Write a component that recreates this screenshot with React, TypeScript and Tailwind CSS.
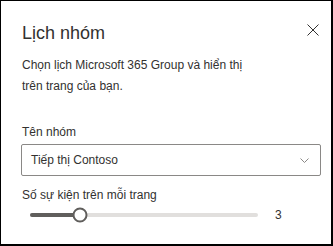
import { useState } from 'react';

export default function App() {
  const [value] = useState(3);
  const pct = 22;

  return (
    <div className="w-[333px] h-[246px] bg-white border-l border-t border-r-2 border-b-2 border-black text-[#323130] font-['Liberation_Sans',Arial,sans-serif]">
      <div className="flex items-start justify-between pl-[21px] pr-[12px] pt-[19px]">
        <h1 className="text-[18px] leading-[26px] font-normal">Lịch nhóm</h1>
        <button className="mt-[4px] w-[12px] h-[12px] flex items-center justify-center text-[#323130]">
          <svg width="12" height="12" viewBox="0 0 12 12" fill="none" stroke="currentColor" strokeWidth="1">
            <path d="M0.5 0.5 L11.5 11.5 M11.5 0.5 L0.5 11.5" />
          </svg>
        </button>
      </div>

      <p className="pl-[21px] pr-[75px] mt-[9px] text-[12px] leading-[21px]">
        Chọn lịch Microsoft 365 Group và hiển thị trên trang của bạn.
      </p>

      <div className="px-[20px] mt-[25px]">
        <label className="block pl-[1px] text-[12px] leading-[20px]">Tên nhóm</label>
        <div className="mt-[2px] h-[32px] w-[300px] border border-[#8a8886] rounded-[2px] flex items-center justify-between pl-[9px] pr-[11px]">
          <span className="text-[12px]">Tiếp thị Contoso</span>
          <svg width="9" height="5" viewBox="0 0 9 5" fill="none" stroke="#8a8886" strokeWidth="1">
            <path d="M0.5 0.5 L4.5 4.5 L8.5 0.5" />
          </svg>
        </div>

        <label className="block pl-[1px] mt-[9px] text-[12px] leading-[20px]">Số sự kiện trên mỗi trang</label>
        <div className="flex items-center mt-[2px] h-[16px]">
          <div className="relative ml-[9px] w-[228px] h-[4px] rounded-full bg-[#e1dfdd]">
            <div className="absolute left-0 top-0 h-[4px] rounded-full bg-[#605e5c]" style={{ width: `${pct}%` }} />
            <div
              className="absolute top-1/2 -translate-y-1/2 -translate-x-1/2 w-[15px] h-[15px] rounded-full bg-white border-2 border-[#605e5c]"
              style={{ left: `${pct}%` }}
            />
          </div>
          <span className="ml-[17px] text-[12px]">{value}</span>
        </div>
      </div>
    </div>
  );
}
